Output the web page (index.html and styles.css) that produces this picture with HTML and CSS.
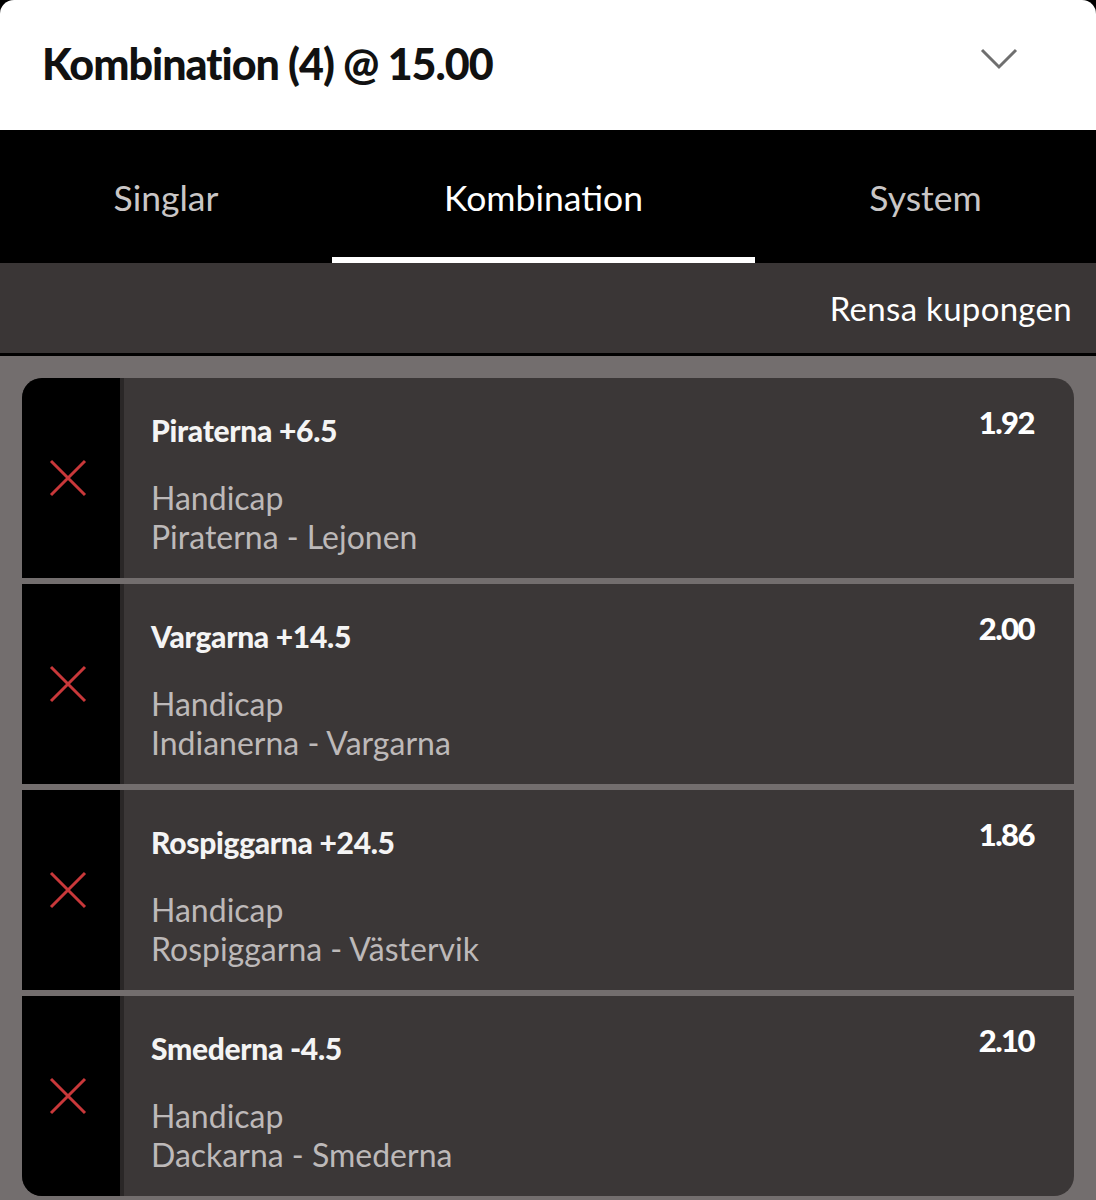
FILE: index.html
```html
<!DOCTYPE html>
<html lang="sv">
<head>
    <meta charset="UTF-8">
    <meta name="viewport" content="width=device-width, initial-scale=1.0">
    <title>Kupong</title>
    <link rel="stylesheet" href="styles.css">
</head>
<body>
    <header class="slip-header">
        <h1>Kombination (4) @ 15.00</h1>
        <svg class="chevron" width="38" height="22" viewBox="0 0 38 22">
            <path d="M2 2 L19 19 L36 2" fill="none" stroke="#6f6f6f" stroke-width="3"/>
        </svg>
    </header>

    <nav class="tabs">
        <div class="tab">Singlar</div>
        <div class="tab active">Kombination</div>
        <div class="tab">System</div>
    </nav>

    <div class="toolbar">
        <span class="clear">Rensa kupongen</span>
    </div>

    <main class="bets">
        <div class="bet">
            <div class="remove">
                <svg width="40" height="40" viewBox="0 0 40 40"><path d="M3 3 L37 37 M37 3 L3 37" stroke="#c9383a" stroke-width="3"/></svg>
            </div>
            <div class="bet-body">
                <div class="bet-top">
                    <span class="selection">Piraterna +6.5</span>
                    <span class="odds">1.92</span>
                </div>
                <div class="market">Handicap</div>
                <div class="event">Piraterna - Lejonen</div>
            </div>
        </div>
        <div class="bet">
            <div class="remove">
                <svg width="40" height="40" viewBox="0 0 40 40"><path d="M3 3 L37 37 M37 3 L3 37" stroke="#c9383a" stroke-width="3"/></svg>
            </div>
            <div class="bet-body">
                <div class="bet-top">
                    <span class="selection">Vargarna +14.5</span>
                    <span class="odds">2.00</span>
                </div>
                <div class="market">Handicap</div>
                <div class="event">Indianerna - Vargarna</div>
            </div>
        </div>
        <div class="bet">
            <div class="remove">
                <svg width="40" height="40" viewBox="0 0 40 40"><path d="M3 3 L37 37 M37 3 L3 37" stroke="#c9383a" stroke-width="3"/></svg>
            </div>
            <div class="bet-body">
                <div class="bet-top">
                    <span class="selection">Rospiggarna +24.5</span>
                    <span class="odds">1.86</span>
                </div>
                <div class="market">Handicap</div>
                <div class="event">Rospiggarna - Västervik</div>
            </div>
        </div>
        <div class="bet">
            <div class="remove">
                <svg width="40" height="40" viewBox="0 0 40 40"><path d="M3 3 L37 37 M37 3 L3 37" stroke="#c9383a" stroke-width="3"/></svg>
            </div>
            <div class="bet-body">
                <div class="bet-top">
                    <span class="selection">Smederna -4.5</span>
                    <span class="odds">2.10</span>
                </div>
                <div class="market">Handicap</div>
                <div class="event">Dackarna - Smederna</div>
            </div>
        </div>
    </main>
</body>
</html>
```

FILE: styles.css
```css
/* General */
body {
    margin: 0;
    font-family: Lato, "Open Sans", sans-serif;
    background-color: #000000;
    overflow: hidden;
    height: 1200px;
    display: flex;
    flex-direction: column;
}

/* Header */
.slip-header {
    height: 130px;
    flex-shrink: 0;
    background-color: #ffffff;
    border-radius: 14px 14px 0 0;
    display: flex;
    align-items: center;
    justify-content: space-between;
    padding: 0 78px 0 42px;
}
.slip-header h1 {
    margin: 0;
    font-size: 43px;
    font-weight: 900;
    letter-spacing: -1px;
    color: #111111;
    padding-bottom: 4px;
}
.chevron {
    margin-bottom: 12px;
}

/* Tabs */
.tabs {
    height: 133px;
    flex-shrink: 0;
    background-color: #000000;
    display: grid;
    grid-template-columns: 332px 423px 1fr;
}
.tab {
    display: flex;
    align-items: center;
    justify-content: center;
    font-size: 35.5px;
    color: #c9c6c6;
    padding-top: 8px;
    border-bottom: 6px solid transparent;
}
.tab.active {
    color: #ffffff;
    border-bottom-color: #ffffff;
}

/* Toolbar */
.toolbar {
    height: 90px;
    flex-shrink: 0;
    background-color: #3a3636;
    border-bottom: 3px solid #000000;
    display: flex;
    align-items: center;
    justify-content: flex-end;
    padding-right: 24px;
}
.clear {
    font-size: 33px;
    color: #ffffff;
    letter-spacing: 0.3px;
}

/* Bets */
.bets {
    flex: 1;
    background-color: #736e6e;
    padding: 22px 22px 0 22px;
    display: flex;
    flex-direction: column;
    gap: 6px;
}
.bet {
    height: 200px;
    flex-shrink: 0;
    display: flex;
    background-color: #3b3737;
}
.bet:first-child {
    border-radius: 20px 20px 0 0;
    overflow: hidden;
}
.bet:last-child {
    border-radius: 0 0 20px 20px;
    overflow: hidden;
}
.remove {
    width: 98px;
    background-color: #000000;
    border-right: 4px solid #2a2727;
    display: flex;
    align-items: center;
    justify-content: center;
}
.remove svg {
    margin-right: 6px;
}
.bet-body {
    flex: 1;
    padding: 25px 40px 0 27px;
}
.bet-top {
    display: flex;
    justify-content: space-between;
    align-items: flex-start;
    margin-bottom: 30px;
}
.selection {
    font-size: 30px;
    font-weight: 900;
    color: #f4f4f4;
    letter-spacing: -0.3px;
    padding-top: 9px;
}
.odds {
    font-size: 31px;
    font-weight: 900;
    color: #ffffff;
    letter-spacing: -1.5px;
}
.market, .event {
    font-size: 32px;
    color: #bdb9b9;
    line-height: 39px;
}
```
